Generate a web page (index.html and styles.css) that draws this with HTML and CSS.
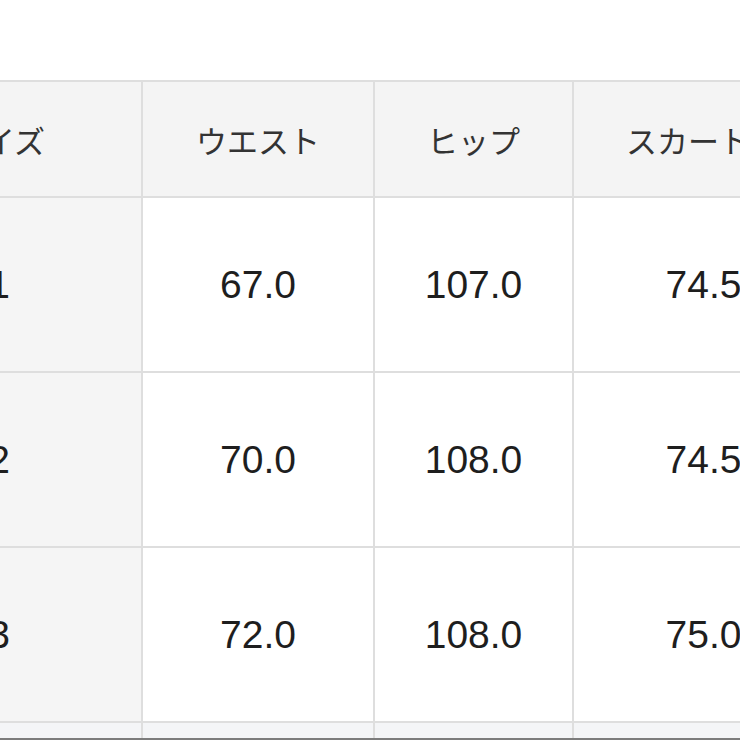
FILE: index.html
```html
<!DOCTYPE html>
<html lang="ja">
<head>
<meta charset="utf-8">
<link rel="stylesheet" href="styles.css">
</head>
<body>
<div class="frame">
  <table class="size-table">
    <colgroup>
      <col class="c1"><col class="c2"><col class="c3"><col class="c4">
    </colgroup>
    <thead>
      <tr class="head">
        <th class="label">サイズ</th>
        <th>ウエスト</th>
        <th>ヒップ</th>
        <th>スカート丈</th>
      </tr>
    </thead>
    <tbody>
      <tr class="row">
        <td class="label num">1</td>
        <td class="num">67.0</td>
        <td class="num">107.0</td>
        <td class="num">74.5</td>
      </tr>
      <tr class="row">
        <td class="label num">2</td>
        <td class="num">70.0</td>
        <td class="num">108.0</td>
        <td class="num">74.5</td>
      </tr>
      <tr class="row">
        <td class="label num">3</td>
        <td class="num">72.0</td>
        <td class="num">108.0</td>
        <td class="num">75.0</td>
      </tr>
      <tr class="row next">
        <td class="label num">4</td>
        <td class="num">75.0</td>
        <td class="num">110.0</td>
        <td class="num">75.5</td>
      </tr>
    </tbody>
  </table>
</div>
</body>
</html>
```
FILE: styles.css
```css
html, body {
  margin: 0;
  padding: 0;
  background: #ffffff;
}
.frame {
  width: 740px;
  height: 740px;
  overflow: hidden;
  padding-top: 80px;
  box-sizing: border-box;
  border-bottom: 2px solid #7c7c7c;
}
.size-table {
  border-collapse: collapse;
  table-layout: fixed;
  width: 978px;
  margin-left: -145px;
}
.c1 { width: 286px; }
.c2 { width: 232px; }
.c3 { width: 199px; }
.c4 { width: 261px; }
.size-table th,
.size-table td {
  border: 2px solid #dedede;
  text-align: center;
  vertical-align: middle;
  padding: 0;
}
.head th {
  height: 114px;
  background: #f4f4f4;
  font-family: "Noto Sans CJK JP", sans-serif;
  font-weight: 400;
  font-size: 31px;
  color: #333333;
}
.row td {
  height: 173px;
  background: #ffffff;
}
.row td.label {
  background: #f5f5f5;
}
.row.next td {
  background: #f4f5f7;
}
.num {
  font-family: "Liberation Sans", Arial, sans-serif;
  font-size: 39px;
  color: #1e1e1e;
}
```
